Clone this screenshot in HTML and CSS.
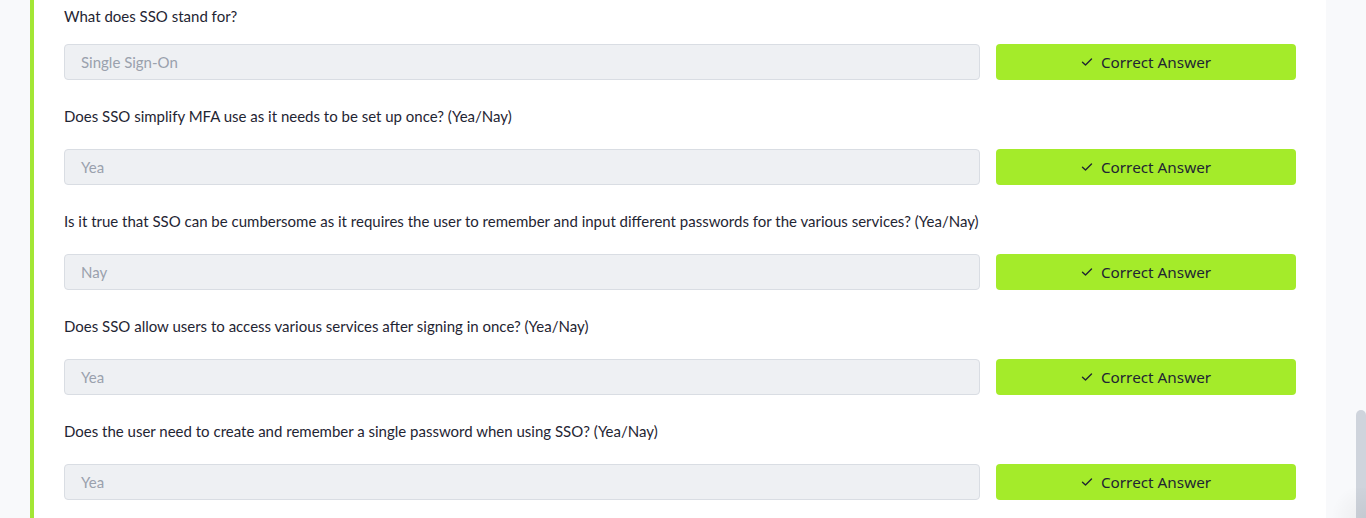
FILE: index.html
```html
<!DOCTYPE html>
<html lang="en">
<head>
<meta charset="utf-8">
<title>SSO Quiz</title>
<link rel="stylesheet" href="styles.css">
</head>
<body>
<div class="page">
  <div class="gutter-left"></div>
  <main class="panel">
    <div class="question">
      <p class="label">What does SSO stand for?</p>
      <div class="answer-row">
        <div class="answer">Single Sign-On</div>
        <button class="correct"><svg class="check" viewBox="0 0 12 12" width="12" height="12"><path d="M1.5 6.2 L4.5 9 L10.5 3" fill="none" stroke="currentColor" stroke-width="1.4" stroke-linecap="round" stroke-linejoin="round"/></svg>Correct Answer</button>
      </div>
    </div>
    <div class="question">
      <p class="label">Does SSO simplify MFA use as it needs to be set up once? (Yea/Nay)</p>
      <div class="answer-row">
        <div class="answer">Yea</div>
        <button class="correct"><svg class="check" viewBox="0 0 12 12" width="12" height="12"><path d="M1.5 6.2 L4.5 9 L10.5 3" fill="none" stroke="currentColor" stroke-width="1.4" stroke-linecap="round" stroke-linejoin="round"/></svg>Correct Answer</button>
      </div>
    </div>
    <div class="question">
      <p class="label">Is it true that SSO can be cumbersome as it requires the user to remember and input different passwords for the various services? (Yea/Nay)</p>
      <div class="answer-row">
        <div class="answer">Nay</div>
        <button class="correct"><svg class="check" viewBox="0 0 12 12" width="12" height="12"><path d="M1.5 6.2 L4.5 9 L10.5 3" fill="none" stroke="currentColor" stroke-width="1.4" stroke-linecap="round" stroke-linejoin="round"/></svg>Correct Answer</button>
      </div>
    </div>
    <div class="question">
      <p class="label">Does SSO allow users to access various services after signing in once? (Yea/Nay)</p>
      <div class="answer-row">
        <div class="answer">Yea</div>
        <button class="correct"><svg class="check" viewBox="0 0 12 12" width="12" height="12"><path d="M1.5 6.2 L4.5 9 L10.5 3" fill="none" stroke="currentColor" stroke-width="1.4" stroke-linecap="round" stroke-linejoin="round"/></svg>Correct Answer</button>
      </div>
    </div>
    <div class="question">
      <p class="label">Does the user need to create and remember a single password when using SSO? (Yea/Nay)</p>
      <div class="answer-row">
        <div class="answer">Yea</div>
        <button class="correct"><svg class="check" viewBox="0 0 12 12" width="12" height="12"><path d="M1.5 6.2 L4.5 9 L10.5 3" fill="none" stroke="currentColor" stroke-width="1.4" stroke-linecap="round" stroke-linejoin="round"/></svg>Correct Answer</button>
      </div>
    </div>
  </main>
  <div class="gutter-right"></div>
</div>
<div class="scroll-thumb"></div>
<div class="corner-shadow"></div>
</body>
</html>
```

FILE: styles.css
```css
html, body {
  margin: 0;
  padding: 0;
  height: 518px;
  overflow: hidden;
  background: #f8f9fb;
}

body {
  font-family: "Lato", "Noto Sans", sans-serif;
  color: #1f2533;
  position: relative;
}

.page {
  display: flex;
  width: 1366px;
  height: 518px;
}

.gutter-left {
  width: 30px;
  flex: none;
}

.gutter-right {
  width: 40px;
  flex: none;
}

.panel {
  flex: 1;
  background: #ffffff;
  border-left: 4px solid #a3e635;
  padding: 4px 30px 0 30px;
  box-sizing: border-box;
}

.question {
  margin-bottom: 24px;
}

.question:last-child {
  margin-bottom: 0;
}

.label {
  margin: 0 0 21px 0;
  font-size: 15px;
  line-height: 24px;
  color: #1f2533;
}

.question:first-child .label {
  margin-bottom: 16px;
}

.answer-row {
  display: flex;
  gap: 16px;
}

.answer {
  flex: 1;
  height: 36px;
  box-sizing: border-box;
  border: 1px solid #d9dde3;
  border-radius: 4px;
  background: #eef0f3;
  padding: 0 16px;
  display: flex;
  align-items: center;
  font-size: 15px;
  color: #9aa1ad;
}

.correct {
  width: 300px;
  height: 36px;
  flex: none;
  border: none;
  border-radius: 4px;
  background: #a4eb2a;
  color: #1f2533;
  font-family: "Noto Sans", sans-serif;
  font-size: 15.3px;
  display: flex;
  align-items: center;
  justify-content: center;
  gap: 8px;
  padding: 0;
}

.check {
  display: block;
}

.scroll-thumb {
  position: absolute;
  left: 1356px;
  top: 410px;
  width: 10px;
  height: 108px;
  background: #cfd4dc;
  border-radius: 5px 5px 0 0;
}

.corner-shadow {
  position: absolute;
  right: 0;
  bottom: 0;
  width: 40px;
  height: 30px;
  border-top-left-radius: 30px;
  background: radial-gradient(circle at 100% 100%, rgba(0, 0, 0, 0.05), rgba(0, 0, 0, 0) 70%);
}
```
